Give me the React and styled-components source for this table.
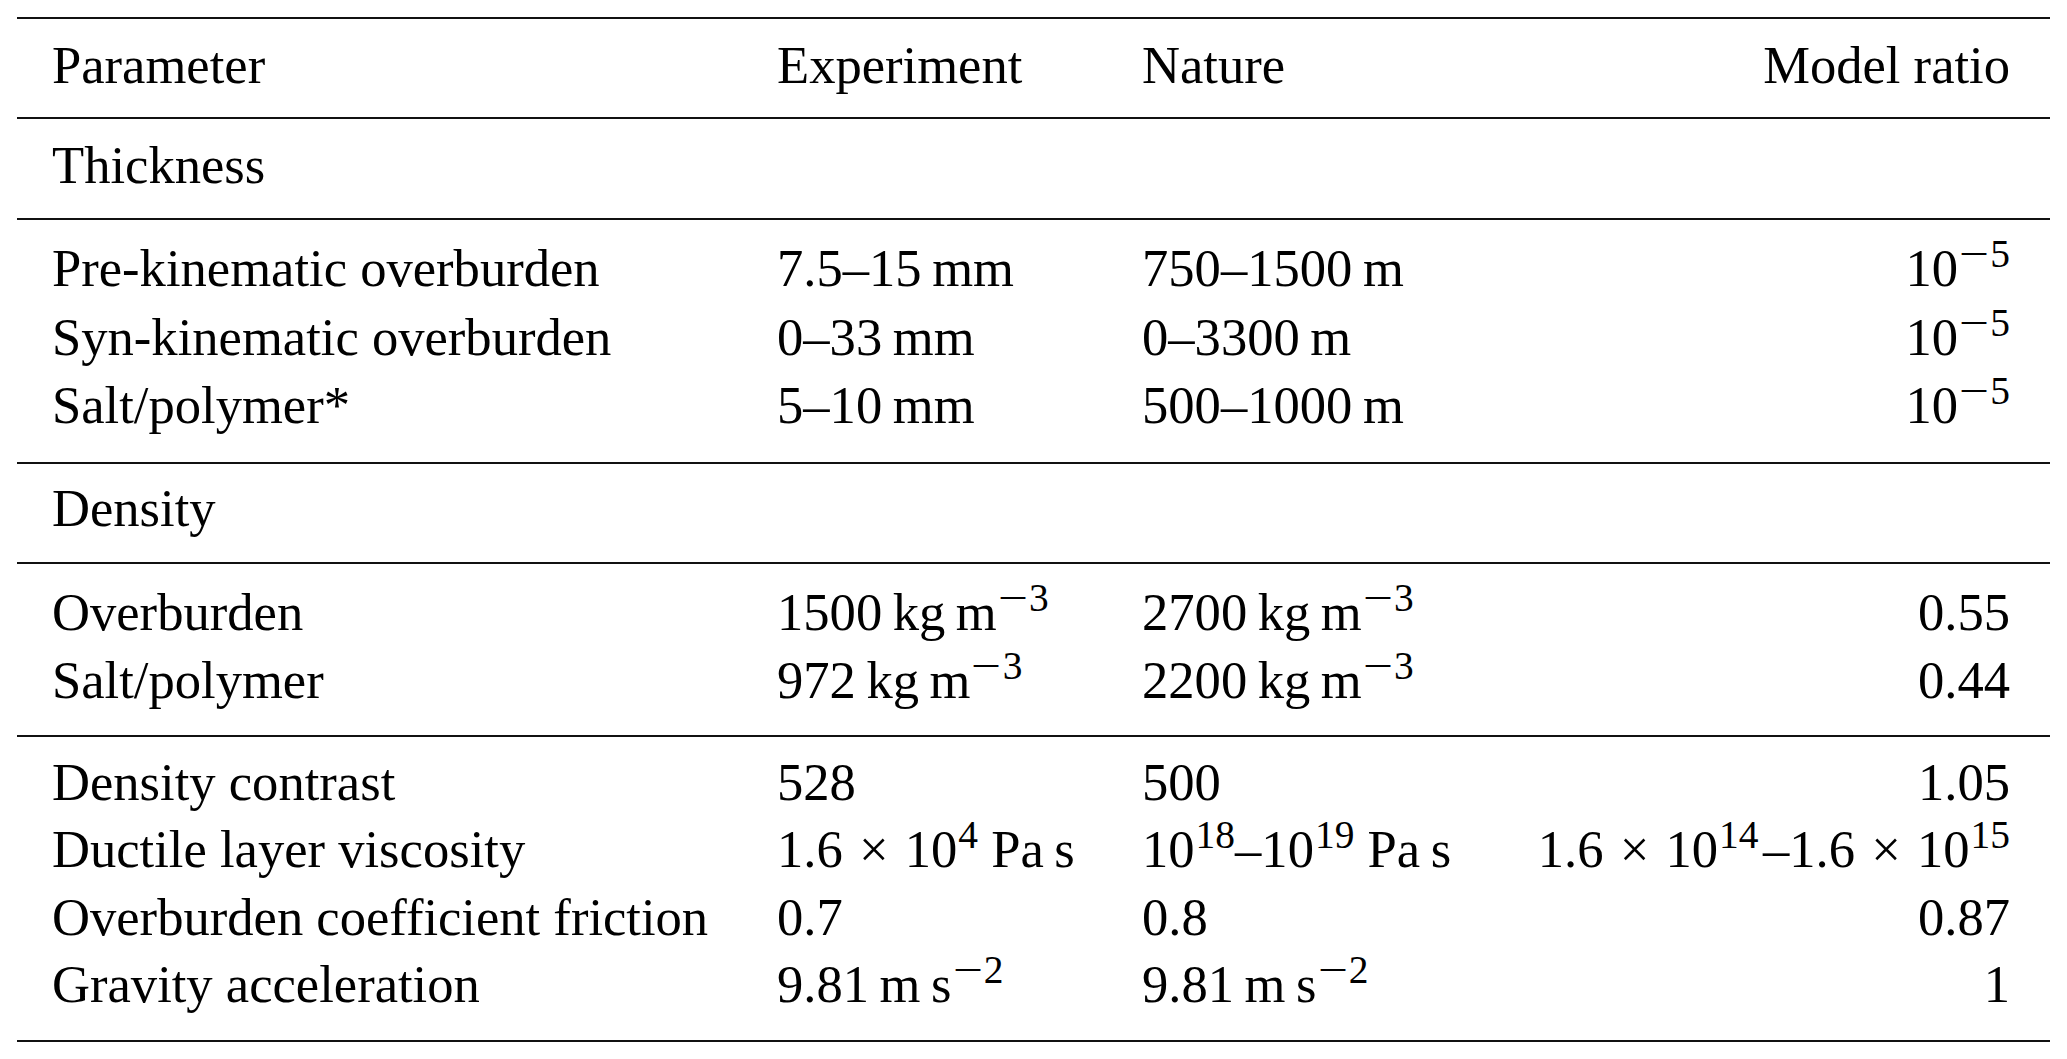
import React from "react";
import styled, { createGlobalStyle } from "styled-components";

const GlobalStyle = createGlobalStyle`
  html, body {
    margin: 0;
    background: #fff;
  }
`;

const Table = styled.div`
  margin: 17px 17px 0;
  border-top: 2px solid #111;
  font-family: "Liberation Serif", "Times New Roman", serif;
  font-size: 52.6px;
  color: #000;
`;

const Section = styled.div`
  padding: ${(p) => p.$pt}px 0 ${(p) => p.$pb}px;
  border-bottom: 2px solid #111;
`;

const Row = styled.div`
  display: grid;
  grid-template-columns: 725px 365px 1fr auto;
  padding: 0 40px 0 35px;
  line-height: ${(p) => p.$lh}px;
`;

const Cell = styled.div`
  white-space: nowrap;
  text-align: ${(p) => (p.$right ? "right" : "left")};
  grid-column: ${(p) => (p.$right ? "4" : "auto")};
`;

const Sup = styled.sup`
  font-size: 0.75em;
  line-height: 0;
  vertical-align: 19px;
  margin-left: 1px;
`;

// the math minus in the exponents is wider than the text one
const Minus = styled.span`
  display: inline-block;
  margin: 0 5px 0 4px;
  transform: scaleX(1.35);
`;

const Times = styled.span`
  margin: 0 3px;
`;

// thin space, like LaTeX \,
const t = "\u2009";

const Pow = ({ base = "10", exp, neg }) => (
  <>
    {base}
    <Sup>
      {neg && <Minus>−</Minus>}
      {exp}
    </Sup>
  </>
);

const density = (n) => (
  <>
    {n}
    {t}kg{t}m
    <Sup>
      <Minus>−</Minus>3
    </Sup>
  </>
);

const gravity = (
  <>
    9.81{t}m{t}s
    <Sup>
      <Minus>−</Minus>2
    </Sup>
  </>
);

const sections = [
  {
    pt: 12,
    pb: 18,
    rows: [["Parameter", "Experiment", "Nature", "Model ratio"]],
  },
  { pt: 12, pb: 19, rows: [["Thickness"]] },
  {
    pt: 14,
    pb: 22,
    lh: 68.5,
    rows: [
      [
        "Pre-kinematic overburden",
        `7.5–15${t}mm`,
        `750–1500${t}m`,
        <Pow neg exp="5" />,
      ],
      [
        "Syn-kinematic overburden",
        `0–33${t}mm`,
        `0–3300${t}m`,
        <Pow neg exp="5" />,
      ],
      ["Salt/polymer*", `5–10${t}mm`, `500–1000${t}m`, <Pow neg exp="5" />],
    ],
  },
  { pt: 10, pb: 20, rows: [["Density"]] },
  {
    pt: 14,
    pb: 21,
    rows: [
      ["Overburden", density("1500"), density("2700"), "0.55"],
      ["Salt/polymer", density("972"), density("2200"), "0.44"],
    ],
  },
  {
    pt: 12,
    pb: 21,
    lh: 67.5,
    rows: [
      ["Density contrast", "528", "500", "1.05"],
      [
        "Ductile layer viscosity",
        <>
          1.6 <Times>×</Times> <Pow exp="4" /> Pa{t}s
        </>,
        <>
          <Pow exp="18" />–<Pow exp="19" /> Pa{t}s
        </>,
        <>
          1.6 <Times>×</Times> <Pow exp="14" />
          {"\u200a"}–1.6 <Times>×</Times> <Pow exp="15" />
        </>,
      ],
      ["Overburden coefficient friction", "0.7", "0.8", "0.87"],
      ["Gravity acceleration", gravity, gravity, "1"],
    ],
  },
];

export default function App() {
  return (
    <>
      <GlobalStyle />
      <Table>
        {sections.map((section, i) => (
          <Section key={i} $pt={section.pt} $pb={section.pb}>
            {section.rows.map((row, j) => (
              <Row key={j} $lh={section.lh || 68}>
                {row.map((cell, k) => (
                  <Cell key={k} $right={k === 3}>
                    {cell}
                  </Cell>
                ))}
              </Row>
            ))}
          </Section>
        ))}
      </Table>
    </>
  );
}
